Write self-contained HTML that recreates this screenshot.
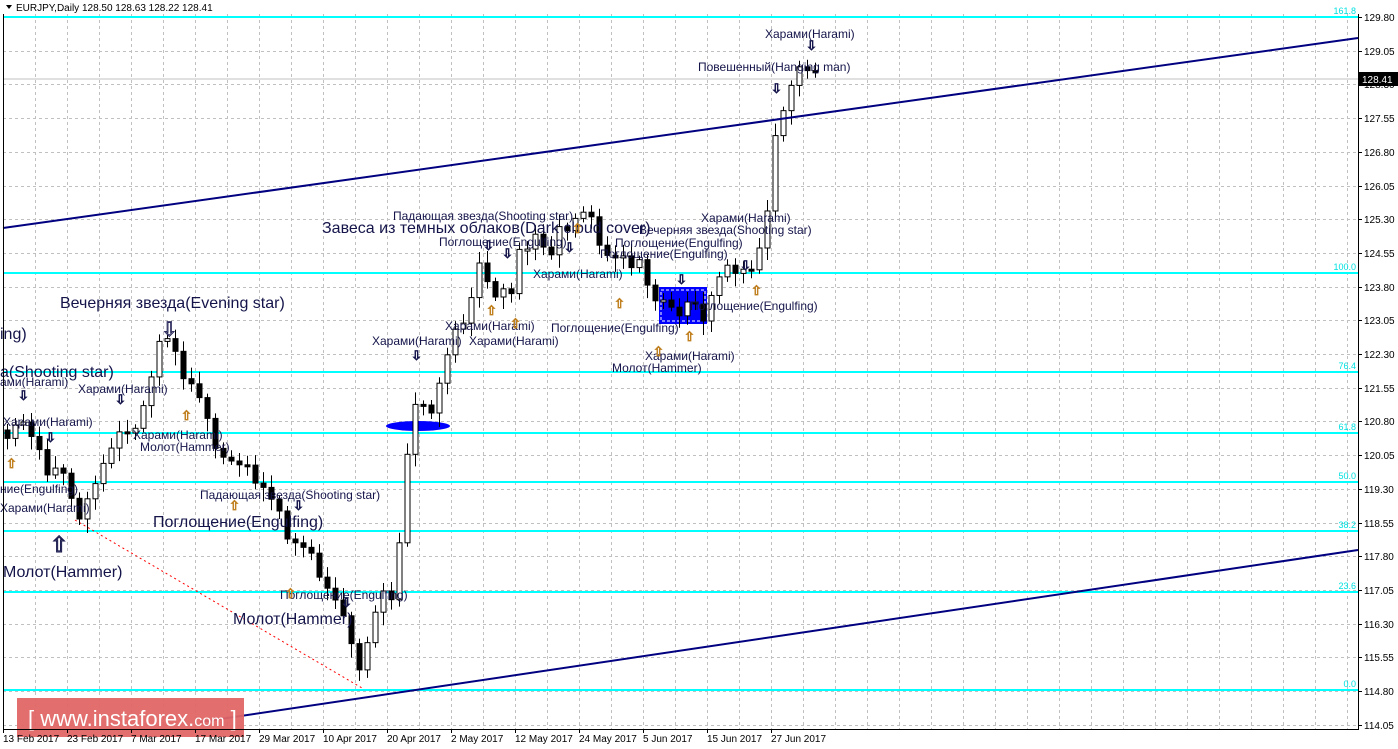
<!DOCTYPE html>
<html><head><meta charset="utf-8">
<style>
html,body{margin:0;padding:0;background:#fff;width:1398px;height:749px;overflow:hidden}
svg{display:block}
text{font-family:"Liberation Sans","DejaVu Sans",sans-serif}
.s{font-size:12px;fill:#14144a}
.b{font-size:16px;fill:#14144a}
.ax{font-size:10px;fill:#000}
.fl{font-size:9px;fill:#00e0e0}
</style></head><body>
<svg id="c" width="1398" height="749" xmlns="http://www.w3.org/2000/svg">
<rect width="1398" height="749" fill="#fff"/>
<g id="grid"></g>
<g stroke="#00ffff" stroke-width="2">
<line x1="3" y1="17" x2="1358" y2="17"/>
<line x1="3" y1="273" x2="1358" y2="273"/>
<line x1="3" y1="372" x2="1358" y2="372"/>
<line x1="3" y1="433" x2="1358" y2="433"/>
<line x1="3" y1="482" x2="1358" y2="482"/>
<line x1="3" y1="531" x2="1358" y2="531"/>
<line x1="3" y1="592" x2="1358" y2="592"/>
<line x1="3" y1="690" x2="1358" y2="690"/>
</g>
<g class="fl" text-anchor="end">
<text x="1356" y="14">161.8</text><text x="1356" y="270">100.0</text><text x="1356" y="369">76.4</text>
<text x="1356" y="430">61.8</text><text x="1356" y="479">50.0</text><text x="1356" y="528">38.2</text>
<text x="1356" y="589">23.6</text><text x="1356" y="687">0.0</text>
</g>
<line x1="3" y1="79" x2="1358" y2="79" stroke="#c0c0c0"/>
<line x1="75" y1="520" x2="362" y2="688" stroke="#ff0000" stroke-dasharray="2,3"/>
<rect x="659" y="287" width="48" height="37" fill="#0000ff"/>
<rect x="661" y="290" width="44" height="31" fill="none" stroke="#fff" stroke-dasharray="3,2"/>
<ellipse cx="418" cy="426" rx="32" ry="5" fill="#0000ff"/>
<g id="candles"></g>
<line x1="3" y1="228" x2="1358" y2="38" stroke="#000080" stroke-width="2"/>
<line x1="200" y1="722" x2="1358" y2="550" stroke="#000080" stroke-width="2"/>
<rect x="17" y="698" width="227" height="39" fill="#e06666" opacity="0.95"/>
<text x="28" y="726" fill="#fff" style="font-size:22px">[ www.instaforex.<tspan style="font-size:16px">com</tspan> ]</text>
<g class="b">
<text x="60" y="308">Вечерняя звезда(Evening star)</text>
<text x="0" y="339">ing)</text>
<text x="0" y="377">a(Shooting star)</text>
<text x="153" y="527">Поглощение(Engulfing)</text>
<text x="3" y="577">Молот(Hammer)</text>
<text x="233" y="624">Молот(Hammer)</text>
<text x="322" y="233">Завеса из темных облаков(Dark cloud cover)</text>
</g>
<g class="s">
<text x="765" y="38">Харами(Harami)</text>
<text x="698" y="71">Повешенный(Hanging man)</text>
<text x="393" y="220">Падающая звезда(Shooting star)</text>
<text x="439" y="246">Поглощение(Engulfing)</text>
<text x="533" y="278">Харами(Harami)</text>
<text x="701" y="222">Харами(Harami)</text>
<text x="639" y="234">Вечерняя звезда(Shooting star)</text>
<text x="615" y="247">Поглощение(Engulfing)</text>
<text x="600" y="258">Поглощение(Engulfing)</text>
<text x="690" y="310">Поглощение(Engulfing)</text>
<text x="551" y="332">Поглощение(Engulfing)</text>
<text x="445" y="330">Харами(Harami)</text>
<text x="372" y="345">Харами(Harami)</text>
<text x="469" y="345">Харами(Harami)</text>
<text x="645" y="360">Харами(Harami)</text>
<text x="612" y="372">Молот(Hammer)</text>
<text x="0" y="386">ами(Harami)</text>
<text x="78" y="393">Харами(Harami)</text>
<text x="3" y="426">Харами(Harami)</text>
<text x="133" y="439">Харами(Harami)</text>
<text x="140" y="451">Молот(Hammer)</text>
<text x="0" y="493">ние(Engulfing)</text>
<text x="0" y="512">Харами(Harami)</text>
<text x="200" y="499">Падающая звезда(Shooting star)</text>
<text x="280" y="599">Поглощение(Engulfing)</text>
</g>
<g style="font-size:13px;fill:#fff;stroke:#14144a;stroke-width:0.8;font-family:'DejaVu Sans'">
<text x="806" y="50">⇩</text><text x="771" y="93">⇩</text><text x="483" y="250">⇩</text><text x="502" y="258">⇩</text>
<text x="564" y="252">⇩</text><text x="676" y="284">⇩</text><text x="411" y="360">⇩</text><text x="18" y="400">⇩</text>
<text x="115" y="404">⇩</text><text x="45" y="442">⇩</text><text x="293" y="510">⇩</text><text x="341" y="607">⇩</text>
<text x="740" y="270">⇩</text><text x="161" y="336" style="font-size:20px">⇩</text>
</g>
<g style="font-size:13px;fill:#fff;stroke:#c08020;stroke-width:0.8;font-family:'DejaVu Sans'">
<text x="486" y="315">⇧</text><text x="510" y="328">⇧</text><text x="572" y="233">⇧</text><text x="614" y="308">⇧</text>
<text x="684" y="341">⇧</text><text x="751" y="295">⇧</text><text x="653" y="356">⇧</text><text x="6" y="468">⇧</text>
<text x="181" y="420">⇧</text><text x="229" y="510">⇧</text><text x="285" y="598">⇧</text>
</g>
<text x="50" y="552" style="font-size:22px;fill:#fff;stroke:#14144a;font-family:'DejaVu Sans'">⇧</text>
<line x1="3.5" y1="14" x2="3.5" y2="729" stroke="#000"/>
<line x1="1358.5" y1="14" x2="1358.5" y2="729" stroke="#000"/>
<line x1="3" y1="729.5" x2="1359" y2="729.5" stroke="#000"/>
<g id="axis"></g>
<rect x="1359" y="72" width="39" height="14" fill="#000"/>
<text x="1362" y="83" style="font-size:10px;fill:#fff">128.41</text>
<path d="M6 5 L12 5 L9 9 Z" fill="#000"/>
<text x="16" y="11" class="ax">EURJPY,Daily  128.50 128.63 128.22 128.41</text>
</svg>
<script>
(function(){
var NS="http://www.w3.org/2000/svg";
function el(p,t,a,txt){var e=document.createElementNS(NS,t);for(var k in a)e.setAttribute(k,a[k]);if(txt)e.textContent=txt;p.appendChild(e);return e;}
var g=document.getElementById('grid');
for(var x=35;x<1358;x+=32)el(g,'line',{x1:x+.5,y1:14,x2:x+.5,y2:729,stroke:'#c0c0c0','stroke-dasharray':'3,3'});
var ax=document.getElementById('axis');
var prices=["129.80","129.05","128.30","127.55","126.80","126.05","125.30","124.55","123.80","123.05","122.30","121.55","120.80","120.05","119.30","118.55","117.80","117.05","116.30","115.55","114.80","114.05"];
for(var i=0;i<prices.length;i++){var y=Math.round(17+i*33.7);
 if(i>0)el(g,'line',{x1:3,y1:y+.5,x2:1358,y2:y+.5,stroke:'#c0c0c0','stroke-dasharray':'3,3'});
 el(ax,'line',{x1:1358,y1:y+.5,x2:1362,y2:y+.5,stroke:'#000'});
 el(ax,'text',{x:1364,y:y+4,'class':'ax'},prices[i]);}
var dates=["13 Feb 2017","23 Feb 2017","7 Mar 2017","17 Mar 2017","29 Mar 2017","10 Apr 2017","20 Apr 2017","2 May 2017","12 May 2017","24 May 2017","5 Jun 2017","15 Jun 2017","27 Jun 2017"];
for(var i=0;i<dates.length;i++){var x=3+i*64;el(ax,'line',{x1:x+.5,y1:729,x2:x+.5,y2:733,stroke:'#000'});el(ax,'text',{x:x,y:742,'class':'ax'},dates[i]);}
var kp=[[-1,430],[7,430],[20,415],[35,450],[45,470],[60,465],[75,520],[90,490],[100,480],[115,425],[130,435],[140,430],[155,350],[163,330],[170,350],[185,375],[195,385],[205,420],[220,450],[240,470],[260,480],[285,530],[300,545],[320,570],[335,600],[345,625],[355,670],[362,660],[370,630],[380,600],[395,590],[403,490],[410,430],[420,390],[430,412],[440,380],[450,350],[470,300],[480,262],[490,300],[500,280],[510,300],[520,250],[535,230],[550,262],[560,232],[580,212],[590,222],[600,240],[610,258],[625,262],[640,255],[650,298],[660,312],[670,300],[680,316],[690,300],[700,322],[715,282],[730,268],[740,262],[750,272],[760,250],[768,215],[775,130],[782,112],[790,90],[800,72],[810,60],[819,78]];
function yAt(x){for(var i=1;i<kp.length;i++)if(x<=kp[i][0]){var a=kp[i-1],b=kp[i];return a[1]+(b[1]-a[1])*(x-a[0])/(b[0]-a[0]);}return kp[kp.length-1][1];}
var cg=document.getElementById('candles');var prev=yAt(-1);
for(var x=7;x<=819;x+=8){var c=yAt(x);var jit=((x*37)%13-6)*1.4;c+=jit;
 var o=prev;var bt=Math.min(o,c),bb=Math.max(o,c);if(bb-bt<2){bb=bt+2;}
 var hi=bt-4-((x*17)%9),lo=bb+4+((x*23)%11);
 el(cg,'line',{x1:x+.5,y1:hi,x2:x+.5,y2:lo,stroke:'#000'});
 el(cg,'rect',{x:x-2,y:bt,width:5,height:bb-bt,fill:(c>o?'#000':'#fff'),stroke:'#000'});
 prev=c;}
})();
</script>
</body></html>
